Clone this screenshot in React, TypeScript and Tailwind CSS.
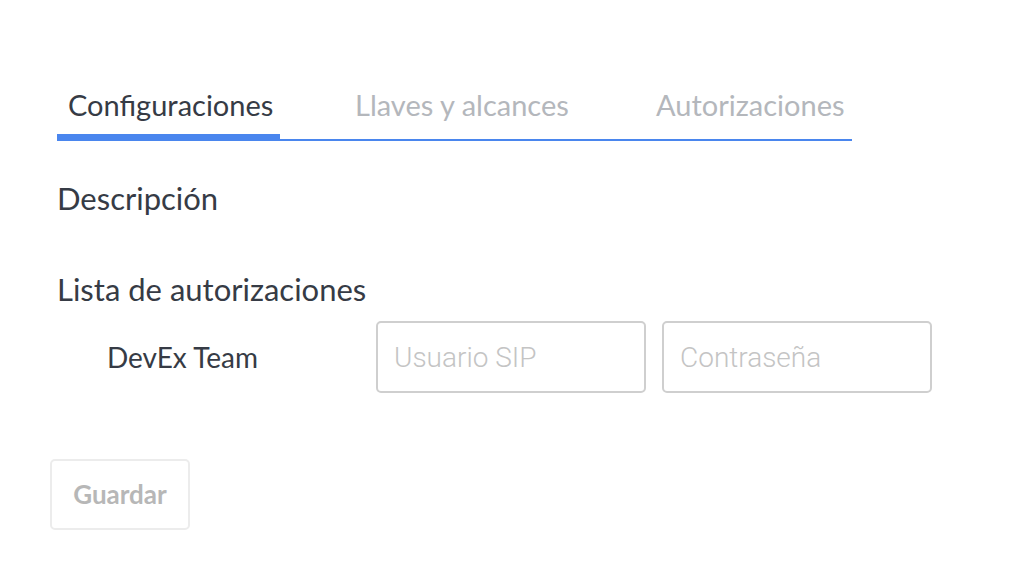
export default function App() {
  const tabs = [
    { label: 'Configuraciones', w: 'w-[223px]', ml: '' },
    { label: 'Llaves y alcances', w: 'w-[238px]', ml: 'ml-[64px]' },
    { label: 'Autorizaciones', w: 'w-[207px]', ml: 'ml-[63px]' },
  ];

  return (
    <main className="min-h-screen bg-white pl-[57px] pt-[86px]" style={{ fontFamily: 'Lato, "Noto Sans", sans-serif' }}>
      <div className="w-[795px] border-b-2 border-[#4a86ee] flex">
        {tabs.map((t, i) => (
          <div key={t.label} className={`relative ${t.w} ${t.ml} pl-[11px] pb-[16px] text-[29px] leading-[37px] whitespace-nowrap`}>
            <span className={i === 0 ? 'text-[#363b45]' : 'text-[#b4b7bc]'}>{t.label}</span>
            {i === 0 && <div className="absolute left-0 right-0 -bottom-[2px] h-[7px] bg-[#4a86ee]" />}
          </div>
        ))}
      </div>

      <h2 className="mt-[37px] text-[31px] leading-[40px] text-[#363b45]">Descripción</h2>

      <h2 className="mt-[51px] text-[31px] leading-[40px] text-[#363b45]">Lista de autorizaciones</h2>

      <div className="mt-[12px] flex items-center">
        <div className="w-[319px] pl-[50px] text-[28px] text-[#363b45]">DevEx Team</div>
        <div className="flex gap-[16px]">
          <input
            placeholder="Usuario SIP"
            className="w-[270px] h-[72px] rounded-[5px] border-2 border-[#cfcfcf] px-[16px] text-[28px] placeholder:text-[#c4c4c4] outline-none"
            style={{ fontFamily: 'Roboto, sans-serif', fontWeight: 300 }}
          />
          <input
            placeholder="Contraseña"
            className="w-[270px] h-[72px] rounded-[5px] border-2 border-[#cfcfcf] px-[16px] text-[28px] placeholder:text-[#c4c4c4] outline-none"
            style={{ fontFamily: 'Roboto, sans-serif', fontWeight: 300 }}
          />
        </div>
      </div>

      <button className="mt-[66px] -ml-[7px] w-[140px] h-[71px] rounded-[5px] border-2 border-[#ececec] text-[26px] font-bold text-[#b7b7b7]">
        Guardar
      </button>
    </main>
  );
}
